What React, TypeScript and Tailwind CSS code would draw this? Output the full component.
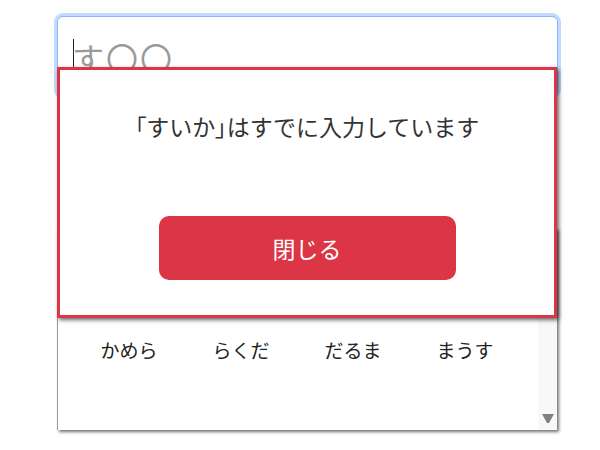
export default function App() {
  const words = ["かめら", "らくだ", "だるま", "まうす"];

  return (
    <div
      className="relative w-[600px] h-[450px] bg-white overflow-hidden"
      style={{ fontFamily: '"Noto Sans CJK JP", "Noto Sans", sans-serif' }}
    >
      {/* answer input (focused) */}
      <div className="absolute left-[57px] top-[16px] w-[501px] h-[80px] rounded-[6px] border border-[#86b7fe] ring-[3px] ring-[#c2dbfe] bg-white">
        <div className="flex items-center h-[60px] pl-[15px] pt-[20px]">
          <span className="w-px h-[36px] bg-[#222]" />
          <span className="text-[32px] leading-none text-[#9a9a9a] -ml-[2px] tracking-[2px]">す〇〇</span>
        </div>
      </div>

      {/* word list */}
      <div className="absolute left-[57px] top-[228px] w-[500px] h-[202px] bg-white border-l border-[#999] shadow-[2px_2px_3px_rgba(0,0,0,0.55)] flex">
        <div className="flex-1 flex items-start pt-[112px] pl-[15px]">
          {words.map((w) => (
            <div key={w} className="w-[112px] text-center text-[19px] leading-none text-[#222]">
              {w}
            </div>
          ))}
        </div>
        <div className="w-[19px] bg-[#f8f8f8] flex items-end justify-center pb-[7px]">
          <svg width="12" height="9" viewBox="0 0 12 9">
            <path d="M0 0 H12 L7 9 H5 Z" fill="#808080" />
          </svg>
        </div>
      </div>

      {/* alert dialog */}
      <div className="absolute left-[57px] top-[67px] w-[500px] h-[251px] bg-white border-[3px] border-[#dc3545] shadow-[2px_2px_4px_rgba(0,0,0,0.6)] flex flex-col items-center">
        <p className="mt-[45px] text-[23px] leading-none text-[#333]">
          <span className="[font-feature-settings:'palt']">「</span>すいか
          <span className="[font-feature-settings:'palt']">」</span>はすでに入力しています
        </p>
        <button className="mt-[78px] w-[297px] h-[64px] rounded-[10px] bg-[#dc3545] text-white text-[23px]">
          閉じる
        </button>
      </div>
    </div>
  );
}
